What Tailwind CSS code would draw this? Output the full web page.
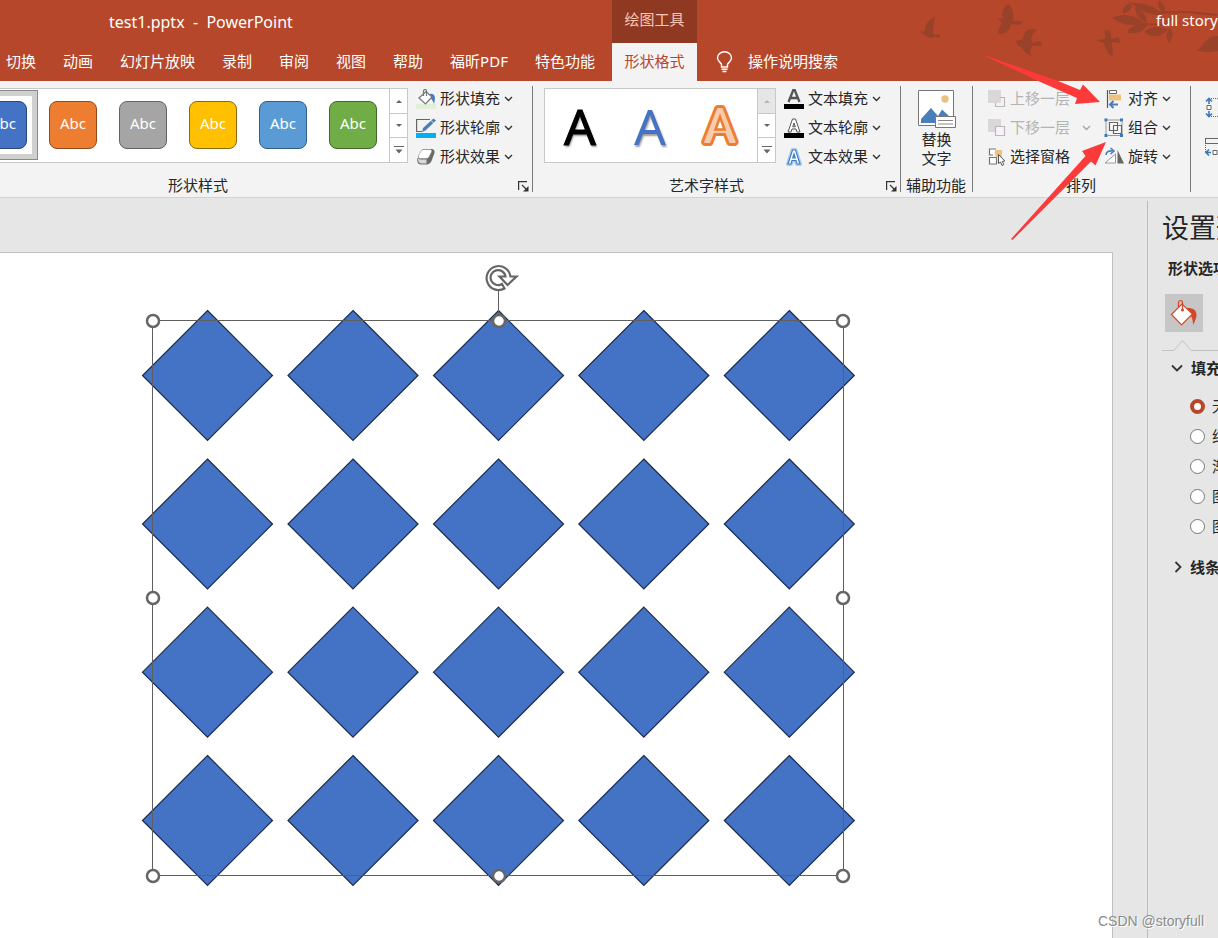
<!DOCTYPE html>
<html lang="zh-CN">
<head>
<meta charset="utf-8">
<title>test1.pptx - PowerPoint</title>
<script src="https://cdn.jsdelivr.net/npm/@tailwindcss/browser@4"></script>
</head>
<body class="relative flex h-screen flex-col overflow-hidden bg-[#e6e6e6] font-['Noto_Sans','Noto_Sans_CJK_SC',sans-serif] text-[15px] text-[#262626]">

<!-- shared symbols -->
<svg class="hidden" aria-hidden="true">
  <symbol id="chev" viewBox="0 0 9 6"><path d="M1 1l3.500 3.500L8 1" fill="none" stroke="#333" stroke-width="1.400"/></symbol>
  <symbol id="launch" viewBox="0 0 11 11"><path d="M.6 9V.6H9M4 4l5 5" fill="none" stroke="#333" stroke-width="1.200"/><path d="M10.500 5v5.500H5z" fill="#333"/></symbol>
  <symbol id="up" viewBox="0 0 6 4"><path d="M0 4L3 1L6 4z" fill="currentColor"/></symbol>
  <symbol id="down" viewBox="0 0 6 4"><path d="M0 0L3 3L6 0z" fill="currentColor"/></symbol>
  <symbol id="more" viewBox="0 0 10 8"><path d="M0 .5H10" stroke="currentColor" /><path d="M1.500 3.500h7L5 7.500z" fill="currentColor"/></symbol>
</svg>

<header class="relative shrink-0 bg-[#b7472a] text-white">
  <!-- decorative birds and branch -->
  <svg class="absolute top-0 right-0" width="338" height="81" viewBox="0 0 338 81" fill="#9a412a" aria-hidden="true">
    <path d="M55 17c-7 3-10 8-10 14-2 1-4 0-5 1 4 2 7 6 11 6l4-1 5 1v-3l-7-1c0-6 1-11 2-17z"/>
    <path d="M128 4c-5 4-7 9-5 14l-6 1 5 3c-2 4-4 8-4 12 8 0 12-3 13-10l9 1 3-3-4-1-6 0c1-7 0-13-5-17z"/>
    <path d="M157 30c-6-3-14 0-14 9l-7 2 2 5c4-1 4 6 14 10-3-4-2-6 0-10l9 0 1-4-4-1-5 2c-3-5-1-9 4-13z"/>
    <path d="M224 31c5-3 8 1 7 8l8-2 1 6-8-1c-1 4 2 9 0 14-5-3-7-9-8-13l-8-3 9-1c1-4-1-6-1-8z"/>
    <path d="M247 0l6 3 22 8 33 0 30 3-1 2-29-3-33 1-20-8z"/>
    <path d="M250 3c5 4-1 9-7 11-1-6 2-9 7-11zM253 3c15 0 27 6 28 12-12 0-23-4-28-12zM255 7c8 4 12 10 12 16-8-3-12-9-12-16zM232 18c14-6 24-2 33 6-13 2-23 2-33-6zM247 33c3-8 13-10 20-9-2 8-10 10-20 9zM264 32c7-6 15-6 24-3-6 9-17 9-24 3zM279 0c5 4 7 8 6 13-6-3-8-8-6-13zM290 28c5 6 2 10-1 15-3-5-4-10 1-15zM317 50c6-2 8-15 21-14v15c-8 1-14 2-21-1z"/>
    <path d="M262 23l22 1 8-8 2 2-8 8-24-1z"/>
  </svg>
  <div class="relative flex h-[43px] items-center justify-between">
    <h1 class="flex-1 pl-[109px] text-base whitespace-pre">test1.pptx  -  PowerPoint</h1>
    <div class="-ml-px flex h-full w-[85px] items-center justify-center bg-[#8f3822] pb-1 text-[#fbc6b3]">绘图工具</div>
    <div class="flex w-[521px] justify-end whitespace-nowrap pb-0.5"><span class="w-[62px]">full story</span></div>
  </div>
  <nav class="relative flex h-[38px] items-center gap-[27px] pl-[6px] whitespace-nowrap">
    <button class="pb-0.5">切换</button><button class="pb-0.5">动画</button><button class="pb-0.5">幻灯片放映</button><button class="pb-0.5">录制</button><button class="pb-0.5">审阅</button><button class="pb-0.5">视图</button><button class="pb-0.5">帮助</button><button class="pb-0.5">福昕PDF</button><button class="pb-0.5">特色功能</button>
    <button class="-ml-[10px] h-full w-[85px] bg-[#f3f3f3] pb-0.5 text-[#b7472a]">形状格式</button>
    <label class="-ml-[8px] flex items-center gap-[15px]">
      <svg width="17" height="22" viewBox="0 0 17 22" fill="none" stroke="#fff" stroke-width="1.400" aria-hidden="true"><path d="M5.500 16v-2.500C5 11.500 1.500 10.500 1.500 7a7 6.300 0 0 1 14 0c0 3.500-3.500 4.500-4 6.500V16zM5.500 18.200h6M6.500 20.500h4"/></svg>
      <input class="w-[120px] bg-transparent pb-0.5 outline-none placeholder:text-white" placeholder="操作说明搜索" aria-label="操作说明搜索">
    </label>
  </nav>
</header>

<!-- ribbon -->
<section class="flex h-[117px] shrink-0 overflow-hidden border-b border-[#d2d2d2] bg-[#f3f3f3] whitespace-nowrap">
  <div class="flex w-[533px] shrink-0 flex-col">
    <div class="flex flex-1">
      <div class="mt-[7px] flex h-[75px] w-[408px] border border-l-0 border-[#c8c8c8] bg-white">
        <div class="flex flex-1 items-center overflow-hidden pb-0.5">
          <button class="-ml-[32px] flex h-[70px] w-[70px] shrink-0 items-center justify-center border border-[#8a8a8a] bg-white ring-5 ring-inset ring-[#d0d0cf]"><span class="flex h-[48px] w-[48px] items-center justify-center rounded-lg border border-[#2a477b] bg-[#4472c4] pb-[3px] text-white">Abc</span></button>
          <button class="flex w-[70px] shrink-0 justify-center"><span class="flex h-[48px] w-[48px] items-center justify-center rounded-lg border border-[#8f4b1d] bg-[#ed7d31] pb-[3px] text-white">Abc</span></button>
          <button class="flex w-[70px] shrink-0 justify-center"><span class="flex h-[48px] w-[48px] items-center justify-center rounded-lg border border-[#636363] bg-[#a5a5a5] pb-[3px] text-white">Abc</span></button>
          <button class="flex w-[70px] shrink-0 justify-center"><span class="flex h-[48px] w-[48px] items-center justify-center rounded-lg border border-[#8a6a08] bg-[#ffc000] pb-[3px] text-white">Abc</span></button>
          <button class="flex w-[70px] shrink-0 justify-center"><span class="flex h-[48px] w-[48px] items-center justify-center rounded-lg border border-[#345d83] bg-[#5b9bd5] pb-[3px] text-white">Abc</span></button>
          <button class="flex w-[70px] shrink-0 justify-center"><span class="flex h-[48px] w-[48px] items-center justify-center rounded-lg border border-[#42672a] bg-[#70ad47] pb-[3px] text-white">Abc</span></button>
        </div>
        <div class="flex w-[18px] flex-col divide-y divide-[#c8c8c8] border-l border-[#c8c8c8] text-[#666]">
          <button class="flex flex-1 items-center justify-center" aria-label="上一行"><svg width="6" height="4"><use href="#up"/></svg></button>
          <button class="flex flex-1 items-center justify-center" aria-label="下一行"><svg width="6" height="4"><use href="#down"/></svg></button>
          <button class="flex flex-1 items-center justify-center" aria-label="其他"><svg width="10" height="8"><use href="#more"/></svg></button>
        </div>
      </div>
      <div class="mt-[3px] ml-2 flex flex-col">
        <button class="flex h-[29px] items-center gap-[4px]">
          <svg width="20" height="20" viewBox="0 0 20 20" fill="none" aria-hidden="true"><path d="M0 15h20v5H0z" fill="#e2efd9"/><path d="M14 5c5-1 6 4 4 10-1-3-2-5-5-7z" fill="#4a7ebb"/><path d="M3 9l7-6.500L16 8l-6.500 7z" fill="#fff" stroke="#777" stroke-width="1.200"/><path d="M7.500 7V2a1.500 1.500 0 0 1 3 0V7" stroke="#777" stroke-width="1.200"/></svg>
          <span>形状填充</span><svg width="9" height="6"><use href="#chev"/></svg></button>
        <button class="flex h-[29px] items-center gap-[4px]">
          <svg width="20" height="20" viewBox="0 0 20 20" fill="none" aria-hidden="true"><path d="M0 15h20v5H0z" fill="#00b0f0"/><path d="M14 1.500H.600v12H6" stroke="#666" stroke-width="1.200"/><path d="M6 14l1-4L17.500.500l2.500 2L9.500 12.500z" fill="#4a7ebb"/><path d="M15 2.500l2.500 2.500" stroke="#f3f3f3" stroke-width=".8"/></svg>
          <span>形状轮廓</span><svg width="9" height="6"><use href="#chev"/></svg></button>
        <button class="flex h-[29px] items-center gap-[4px]">
          <svg width="20" height="20" viewBox="0 0 20 20" aria-hidden="true"><path d="M7 2h9q3 .5 2.500 4l-3 8q-1 3-4 3.500H4.500Q1 17 1.200 12z" fill="#6a6a6a"/><path d="M7.500 2.500H14q2.500 0 1.500 2.500L13 10q-1 1.500-3 1.500H4q-2.500 0-1.500-3L5 4q1-1.500 2.500-1.500z" fill="#fff" stroke="#888" stroke-width=".6"/><path d="M1.800 11q1 1.500 3 1.500h5.700v4H5q-3-.5-3.200-5.500z" fill="#d8d8d8"/></svg>
          <span>形状效果</span><svg width="9" height="6"><use href="#chev"/></svg></button>
      </div>
      <div class="mt-[5px] -mb-[19px] ml-auto w-px bg-[#777]"></div>
    </div>
    <div class="flex h-[24px] items-center pr-[4px]"><span class="flex-1 pr-[122px] text-center">形状样式</span><button class="pt-0.5" aria-label="设置形状格式"><svg width="11" height="11"><use href="#launch"/></svg></button></div>
  </div>

  <div class="flex w-[368px] shrink-0 flex-col">
    <div class="flex flex-1">
      <div class="mt-[7px] ml-[11px] flex h-[75px] w-[232px] border border-[#c8c8c8] bg-white">
        <div class="flex flex-1 items-center overflow-hidden text-[50px] leading-none">
          <button class="w-[70px] text-black [text-shadow:1px_2px_2px_#0006] [-webkit-text-stroke:1px_#000]">A</button>
          <button class="w-[70px] text-[#4472c4] [text-shadow:1px_2px_2px_#0006]">A</button>
          <button class="w-[70px] text-[46px]"><svg class="mx-auto" width="44" height="46" viewBox="0 0 44 46" role="img" aria-label="A"><text x="22" y="39" text-anchor="middle" class="fill-[#ed7d31] stroke-[#ed7d31] stroke-8 [stroke-linejoin:round]">A</text><text x="22" y="39" text-anchor="middle" class="fill-[#f8cbad] stroke-[#f8cbad] stroke-2 [stroke-linejoin:round]">A</text><path d="M22 14l4.500 12.500h-9z" fill="#fff" stroke="#ed7d31" stroke-width="2.500"/></svg></button>
        </div>
        <div class="flex w-[18px] flex-col divide-y divide-[#c8c8c8] border-l border-[#c8c8c8] text-[#666]">
          <button class="flex flex-1 items-center justify-center bg-[#e6e6e6] text-[#b5b5b5]" aria-label="上一行"><svg width="6" height="4"><use href="#up"/></svg></button>
          <button class="flex flex-1 items-center justify-center" aria-label="下一行"><svg width="6" height="4"><use href="#down"/></svg></button>
          <button class="flex flex-1 items-center justify-center" aria-label="其他"><svg width="10" height="8"><use href="#more"/></svg></button>
        </div>
      </div>
      <div class="mt-[3px] ml-2 flex flex-col">
        <button class="flex h-[29px] items-center gap-[4px]">
          <svg width="20" height="20" viewBox="0 0 20 20" fill="none" aria-hidden="true"><path d="M0 15h20v5H0z" fill="#000"/><path d="M4.500 13L9.300 1h1.400L15.500 13M6.500 9h7" stroke="#555" stroke-width="2.300"/></svg>
          <span>文本填充</span><svg width="9" height="6"><use href="#chev"/></svg></button>
        <button class="flex h-[29px] items-center gap-[4px]">
          <svg width="20" height="20" viewBox="0 0 20 20" aria-hidden="true"><path d="M0 15h20v5H0z" fill="#000"/><path d="M8.500 1h3L16 14h-3l-1-3H8l-1 3H4zM10 5L8.700 8.800h2.600z" fill="#fff" stroke="#555" stroke-width="1" fill-rule="evenodd"/></svg>
          <span>文本轮廓</span><svg width="9" height="6"><use href="#chev"/></svg></button>
        <button class="flex h-[29px] items-center gap-[4px]">
          <svg width="20" height="20" viewBox="0 0 20 20" aria-hidden="true"><path d="M8.500 3h3L16 17h-3l-1-3.500H8L7 17H4z" fill="#a9cdf0" stroke="#a9cdf0" stroke-width="4" stroke-linejoin="round"/><path d="M8.500 3h3L16 17h-3l-1-3.500H8L7 17H4zM10 7l-1.300 4h2.600z" fill="#fff" stroke="#3f7fca" stroke-width="1.200" fill-rule="evenodd"/></svg>
          <span>文本效果</span><svg width="9" height="6"><use href="#chev"/></svg></button>
      </div>
      <div class="mt-[5px] -mb-[19px] ml-auto w-px bg-[#777]"></div>
    </div>
    <div class="flex h-[24px] items-center pr-[4px]"><span class="flex-1 pr-[6px] text-center">艺术字样式</span><button class="pt-0.5" aria-label="设置文本效果格式"><svg width="11" height="11"><use href="#launch"/></svg></button></div>
  </div>

  <div class="flex w-[72px] shrink-0 flex-col">
    <div class="flex flex-1">
      <button class="flex flex-1 flex-col items-center pt-[9px] leading-[19px]">
        <svg width="38" height="38" viewBox="0 0 38 38" aria-hidden="true"><path d="M.5.500h35v35H.5z" fill="#fff" stroke="#777"/><circle cx="27" cy="9" r="3.700" fill="#eac282"/><path d="M3 33V29L13 18l7 8 4-6.500L32 27v6z" fill="#4a7ebb"/><path d="M17.500 26.500h20v11h-20z" fill="#fff" stroke="#777"/><path d="M20 30.500h15M20 34h15" stroke="#888"/></svg>
        <span class="mt-[2px]">替换</span><span>文字</span>
      </button>
      <div class="mt-[5px] -mb-[19px] w-px bg-[#777]"></div>
    </div>
    <div class="flex h-[24px] items-center justify-center pr-0.5">辅助功能</div>
  </div>

  <div class="flex w-[218px] shrink-0 flex-col">
    <div class="flex flex-1">
      <div class="mt-[3px] ml-[15px] flex w-[116px] flex-col">
        <button class="flex h-[29px] items-center text-[#b4b4b4]" disabled>
          <svg width="18" height="18" viewBox="0 0 18 18" aria-hidden="true"><path d="M0 0h13v13H0z" fill="#dad6da"/><path d="M12 7.500h4.500v9h-9V13" fill="none" stroke="#b8b8b8" stroke-width="1.200"/></svg>
          <span class="ml-[4px]">上移一层</span><svg width="9" height="6" class="ml-3 opacity-40"><use href="#chev"/></svg></button>
        <button class="flex h-[29px] items-center text-[#b4b4b4]" disabled>
          <svg width="18" height="18" viewBox="0 0 18 18" aria-hidden="true"><path d="M0 0h13v13H0z" fill="#dad6da"/><path d="M7.500 7.500h9v9h-9z" fill="#f7f3f9" stroke="#b8b8b8" stroke-width="1.200"/></svg>
          <span class="ml-[4px]">下移一层</span><svg width="9" height="6" class="ml-3 opacity-40"><use href="#chev"/></svg></button>
        <button class="flex h-[29px] items-center">
          <svg width="18" height="18" viewBox="0 0 18 18" aria-hidden="true"><path d="M6 2h8v7H8z" fill="#eec27c"/><path d="M8 1H1.500v6H5M1.500 9.500h7v6.500h-7z" fill="#fff" stroke="#777" stroke-width="1.200"/><path d="M10.500 6.500v9l2-1.500 1.500 3.500 1.800-1-1.500-3 2.500-.5z" fill="#fff" stroke="#555"/></svg>
          <span class="ml-[4px]">选择窗格</span></button>
      </div>
      <div class="mt-[3px] flex flex-col">
        <button class="flex h-[29px] items-center gap-[4px]">
          <svg width="20" height="20" viewBox="0 0 20 20" fill="none" aria-hidden="true"><path d="M3.500 1v18" stroke="#555" stroke-width="1.200"/><path d="M5.500 1.500h7v3h-7z" fill="#fff" stroke="#666"/><path d="M5 5.500h12v6H5z" fill="#eec27c"/><path d="M14 15.500H6.500M9.500 12l-3.500 3.500 3.500 3.500" stroke="#4a7ebb" stroke-width="2"/></svg>
          <span>对齐</span><svg width="9" height="6"><use href="#chev"/></svg></button>
        <button class="flex h-[29px] items-center gap-[4px]">
          <svg width="20" height="20" viewBox="0 0 20 20" fill="none" aria-hidden="true"><path d="M4 2h12M4 17.500h12M2 4v12M18 4v12" stroke="#999"/><path d="M5.500 4.500h8v8h-8zM9.500 7.500h8v8h-8z" fill="#fff" fill-opacity=".6" stroke="#666" stroke-width="1.200"/><path d="M.5.500h3v3h-3zM16 .5h3v3h-3zM.5 16h3v3h-3zM16 16h3v3h-3z" fill="#3b78b8"/></svg>
          <span>组合</span><svg width="9" height="6"><use href="#chev"/></svg></button>
        <button class="flex h-[29px] items-center gap-[4px]">
          <svg width="20" height="20" viewBox="0 0 20 20" fill="none" aria-hidden="true"><path d="M11.500 7v9H1z" fill="#fff" stroke="#999"/><path d="M13.500 3v13.500H20z" fill="#666"/><path d="M2 8c0-3.500 3-4.500 7-4" stroke="#4a7ebb" stroke-width="1.600"/><path d="M6.500 1l3.500 3-3.500 3" stroke="#4a7ebb" stroke-width="1.600"/></svg>
          <span>旋转</span><svg width="9" height="6"><use href="#chev"/></svg></button>
      </div>
      <div class="mt-[5px] -mb-[19px] ml-auto w-px bg-[#777]"></div>
    </div>
    <div class="flex h-[24px] items-center justify-center pr-0.5">排列</div>
  </div>

  <div class="flex flex-1 flex-col gap-[19px] overflow-hidden pt-[16px] pl-[14px]">
    <svg class="shrink-0" width="20" height="21" viewBox="0 0 20 21" fill="none" aria-hidden="true"><path d="M6 1.500h14M6 19.500h14" stroke="#666" stroke-dasharray="1 1"/><path d="M4 7V2M1 4.500L4 1.500l3 3M4 14v5M1 16.500l3 3 3-3" stroke="#3b78b8" stroke-width="1.600"/><path d="M2 8.500h4v4H2z" fill="#fff" stroke="#666"/></svg>
    <svg class="shrink-0" width="20" height="21" viewBox="0 0 20 21" fill="none" aria-hidden="true"><path d="M.5 1.500H20M.5 6.500H20M.5 1v6" stroke="#666"/><path d="M.5 8v8" stroke="#666" stroke-dasharray="1 1"/><path d="M6 15.500H1M4 12.500l-3 3 3 3" stroke="#3b78b8" stroke-width="1.600"/><path d="M8 13.500h4v4H8z" fill="#fff" stroke="#666"/></svg>
  </div>
</section>

<main class="flex min-h-0 flex-1">
  <!-- slide canvas -->
  <section class="mt-[54px] mr-[34px] min-w-0 flex-1 overflow-hidden border-t border-r border-[#c0c0c0] bg-white">
    <svg width="1000" height="685" viewBox="0 253 1000 685" role="img" aria-label="二十个菱形">
      <defs>
        <path id="d" d="M0-65L65 0L0 65L-65 0z" fill="#4472c4" stroke="#1a2c4e" stroke-width="1.200"/>
        <g id="row"><use href="#d" x="207.500"/><use href="#d" x="353"/><use href="#d" x="498.500"/><use href="#d" x="643.800"/><use href="#d" x="789.300"/></g>
        <circle id="h" r="6" fill="#fff" stroke="#666" stroke-width="2.500"/>
      </defs>
      <use href="#row" y="375.500"/><use href="#row" y="524"/><use href="#row" y="672.200"/><use href="#row" y="820.500"/>
      <path d="M152.500 320.500h691v555h-691zM498.500 320V291" fill="none" stroke="#5f5f5f"/>
      <use href="#h" x="153" y="321"/><use href="#h" x="499" y="321"/><use href="#h" x="843" y="321"/>
      <use href="#h" x="153" y="598"/><use href="#h" x="843" y="598"/>
      <use href="#h" x="153" y="876"/><use href="#h" x="499" y="876"/><use href="#h" x="843" y="876"/>
      <!-- rotate handle -->
      <path d="M510.500 276.500A12 12 0 1 0 504.500 288.500L502 284A7.500 7.500 0 1 1 505.500 276.500H499.500L507.500 285L516.500 276.500z" fill="#fff" stroke="#666" stroke-width="2.200"/>
    </svg>
  </section>

  <!-- format pane -->
  <aside class="mt-[3px] w-[71px] shrink-0 overflow-hidden border-l border-[#bcbcbc] pl-[14px] whitespace-nowrap">
    <h2 class="mt-[8px] text-[27px] leading-[38px]">设置形状格式</h2>
    <h3 class="mt-[10px] ml-[6px] leading-[22px] font-bold">形状选项</h3>
    <button class="mt-[15px] ml-[3px] flex h-[38px] w-[38px] items-center justify-center bg-[#c6c6c6]" aria-label="填充与线条">
      <svg width="28" height="28" viewBox="0 0 28 28" fill="none" aria-hidden="true"><path d="M16 9c10-1 14 5 7 17 0-7-2-10-6-13z" fill="#d24726"/><path d="M1.500 15.500L12 5l10.500 10L11.500 26z" fill="#fff" stroke="#d24726" stroke-width="1.200"/><path d="M8.500 9V3.500a2 2 0 0 1 4 0V10" stroke="#d24726" stroke-width="1.200"/><circle cx="12.500" cy="11" r="1.500" fill="#d24726"/></svg>
    </button>
    <svg class="mt-[7px]" width="200" height="12" viewBox="0 0 200 12" fill="none" stroke="#c2c2c2" aria-hidden="true"><path d="M0 11.500h12L20.500 1.500L29 11.500H200"/></svg>
    <button class="mt-[6px] ml-[9px] flex h-[22px] items-center gap-[8px] font-bold"><svg width="12" height="8" viewBox="0 0 12 8" fill="none" stroke="#333" stroke-width="1.800" aria-hidden="true"><path d="M1 1.500l5 5 5-5"/></svg>填充</button>
    <div class="mt-[12px] ml-[28px] flex flex-col">
      <label class="flex h-[30px] items-center gap-[7px]"><input type="radio" name="fill" checked class="h-[15px] w-[15px] shrink-0 appearance-none rounded-full border border-[#777] bg-white checked:border-4 checked:border-[#b7472a]">无填充</label>
      <label class="flex h-[30px] items-center gap-[7px]"><input type="radio" name="fill" class="h-[15px] w-[15px] shrink-0 appearance-none rounded-full border border-[#777] bg-white checked:border-4 checked:border-[#b7472a]">纯色填充</label>
      <label class="flex h-[30px] items-center gap-[7px]"><input type="radio" name="fill" class="h-[15px] w-[15px] shrink-0 appearance-none rounded-full border border-[#777] bg-white checked:border-4 checked:border-[#b7472a]">渐变填充</label>
      <label class="flex h-[30px] items-center gap-[7px]"><input type="radio" name="fill" class="h-[15px] w-[15px] shrink-0 appearance-none rounded-full border border-[#777] bg-white checked:border-4 checked:border-[#b7472a]">图片或纹理填充</label>
      <label class="flex h-[30px] items-center gap-[7px]"><input type="radio" name="fill" class="h-[15px] w-[15px] shrink-0 appearance-none rounded-full border border-[#777] bg-white checked:border-4 checked:border-[#b7472a]">图案填充</label>
    </div>
    <button class="mt-[15px] ml-[12px] flex h-[22px] items-center gap-[8px] font-bold"><svg width="8" height="12" viewBox="0 0 8 12" fill="none" stroke="#333" stroke-width="1.800" aria-hidden="true"><path d="M1.500 1l5 5-5 5"/></svg>线条</button>
  </aside>
</main>

<!-- annotation arrows -->
<svg class="pointer-events-none absolute top-0 left-0" width="1218" height="260" viewBox="0 0 1218 260" fill="#fc3a3a" aria-hidden="true">
  <path d="M981 54L1037 80.500L1077 98L1075 104L1100 102L1083 84.500L1080 90L1058 81z"/>
  <path d="M1011 239L1085.500 156L1082 151L1106 142L1095.500 165.500L1091 161.500L1012.500 240z"/>
</svg>
<p class="absolute right-[14px] bottom-[7px] font-['Liberation_Sans'] text-sm text-[#8c8c8c] [text-shadow:1px_1px_0_#fff]">CSDN @storyfull</p>
</body>
</html>
